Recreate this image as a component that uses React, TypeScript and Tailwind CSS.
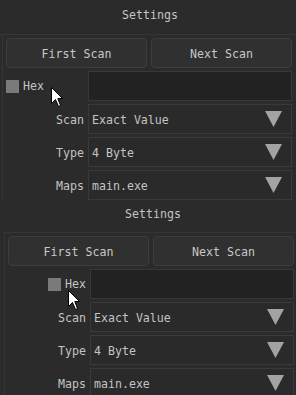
import React from "react";

const font = { fontFamily: '"DejaVu Sans Mono", "Liberation Mono", monospace' };

const Arrow = () => (
  <svg width="17" height="16" viewBox="0 0 17 16" className="shrink-0">
    <polygon points="0,0 17,0 8.5,16" fill="#a3a3a3" />
  </svg>
);

const Cursor = ({ x, y }: { x: number; y: number }) => (
  <svg
    width="13"
    height="21"
    viewBox="0 0 13 21"
    className="absolute pointer-events-none"
    style={{ left: x - 0.5, top: y - 0.5 }}
  >
    <path
      d="M0.5 0.5 L0.5 16.5 L4.5 12.5 L7.5 19.5 L9.5 18.5 L6.8 11.5 L11.5 11.5 Z"
      fill="#ffffff"
      stroke="#000000"
      strokeWidth="1"
    />
  </svg>
);

const Combo = ({ label, value }: { label: string; value: string }) => (
  <div className="flex gap-[4px] h-[30px]">
    <div className="w-[78px] flex items-center justify-end pt-[3px]">{label}</div>
    <div className="flex-1 flex items-center justify-between bg-[#2a2a2a] border border-[#3a3a3a] pl-[3px] pr-[9px]">
      <span className="pt-[3px]">{value}</span>
      <Arrow />
    </div>
  </div>
);

const Panel = ({
  left,
  lineLeft,
  headerH,
  headerPb,
  hexRight,
}: {
  left: string;
  lineLeft: string;
  headerH: string;
  headerPb: string;
  hexRight: boolean;
}) => (
  <div className={`w-[300px] shrink-0 ${left}`}>
    <div className={`flex items-center justify-center ${headerH} ${headerPb}`}>Settings</div>
    <div className={`border-t border-[#353535] ${lineLeft}`}>
      <div className="border-l border-[#353535] pl-[3px] pt-[3px] flex flex-col gap-[3px] w-[290px]">
        <div className="flex gap-[4px]">
          <button className="w-[141px] h-[30px] pt-[3px] rounded-[4px] bg-[#303030] border border-[#3d3d3d] text-[#c8c8c8]">
            First Scan
          </button>
          <button className="w-[141px] h-[30px] pt-[3px] rounded-[4px] bg-[#303030] border border-[#3d3d3d] text-[#c8c8c8]">
            Next Scan
          </button>
        </div>
        <div className="flex gap-[4px] h-[30px] w-[286px]">
          <div className={`w-[78px] flex items-center gap-[4px] ${hexRight ? "justify-end" : "justify-start"}`}>
            <div className="w-[13px] h-[13px] bg-[#7a7a7a]" />
            <span className="pt-[2px]">Hex</span>
          </div>
          <div className="flex-1 bg-[#222222] border border-[#383838]" />
        </div>
        <div className="w-[286px] flex flex-col gap-[3px]">
          <Combo label="Scan" value="Exact Value" />
          <Combo label="Type" value="4 Byte" />
          <Combo label="Maps" value="main.exe" />
        </div>
      </div>
    </div>
  </div>
);

export default function App() {
  return (
    <div
      className="relative w-[296px] h-[395px] overflow-hidden bg-[#2b2b2b] text-[#c4c4c4] text-[11.6px] leading-none"
      style={font}
    >
      <div className="flex flex-col">
        <div className="h-[201px] overflow-hidden">
          <Panel left="ml-0" lineLeft="pl-[2px]" headerH="h-[34px]" headerPb="pb-[2px]" hexRight={false} />
        </div>
        <Panel left="ml-[3px]" lineLeft="pl-[1px]" headerH="h-[31px]" headerPb="pb-[4px]" hexRight={true} />
      </div>
      <Cursor x={51} y={87} />
      <Cursor x={68} y={290} />
    </div>
  );
}
